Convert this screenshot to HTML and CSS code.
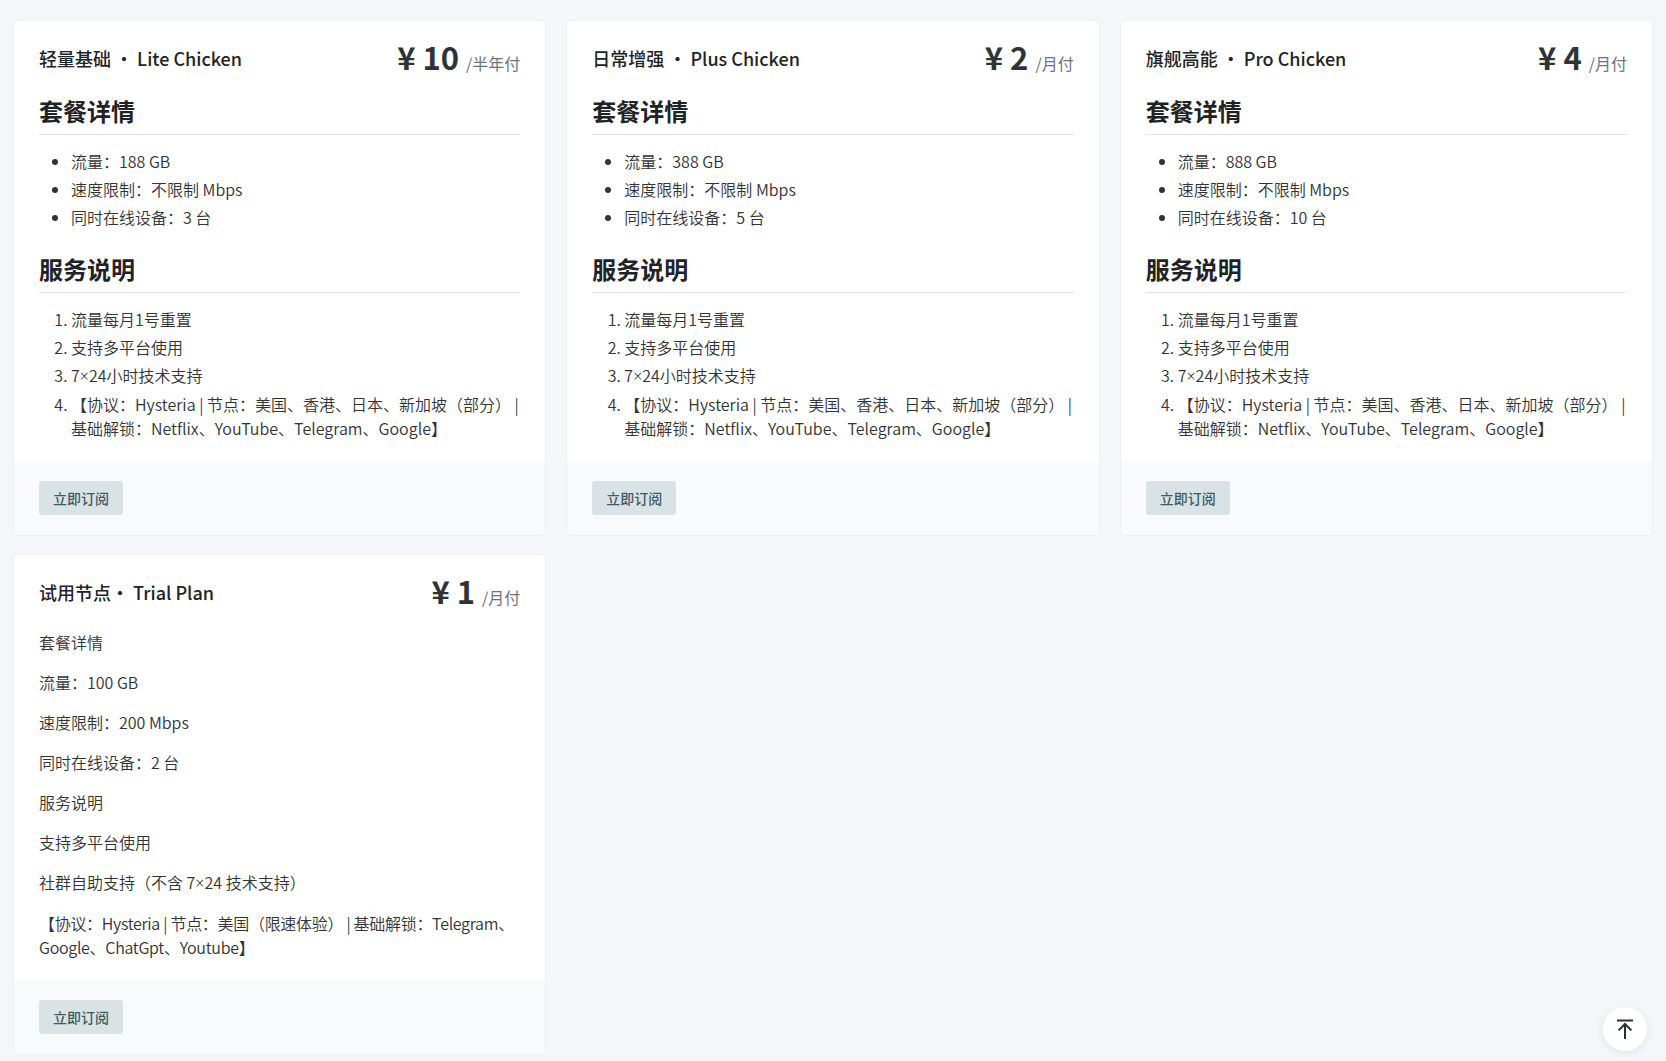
FILE: index.html
```html
<!DOCTYPE html>
<html lang="en">
<head>
	<meta charset="UTF-8">
	<title>购买订阅</title>
	<link rel="stylesheet" href="styles.css">
</head>
<body>
	<div class="plan-list">
		<div class="plan-card">
			<div class="plan-body">
				<div class="plan-head">
					<div class="plan-title">轻量基础 ・ Lite Chicken</div>
					<div class="plan-price">¥ 10<span class="plan-unit">/半年付</span></div>
				</div>
				<div class="plan-content">
					<h3>套餐详情</h3>
					<ul>
						<li>流量：188 GB</li>
						<li>速度限制：不限制 Mbps</li>
						<li>同时在线设备：3 台</li>
					</ul>
					<h3>服务说明</h3>
					<ol>
						<li>流量每月1号重置</li>
						<li>支持多平台使用</li>
						<li>7<span class="times">×</span>24小时技术支持</li>
						<li>【协议：Hysteria | 节点：美国、香港、日本、新加坡（部分） | 基础解锁：Netflix、YouTube、Telegram、Google】</li>
					</ol>
				</div>
			</div>
			<div class="plan-foot"><button class="btn-buy">立即订阅</button></div>
		</div>

		<div class="plan-card">
			<div class="plan-body">
				<div class="plan-head">
					<div class="plan-title">日常增强 ・ Plus Chicken</div>
					<div class="plan-price">¥ 2<span class="plan-unit">/月付</span></div>
				</div>
				<div class="plan-content">
					<h3>套餐详情</h3>
					<ul>
						<li>流量：388 GB</li>
						<li>速度限制：不限制 Mbps</li>
						<li>同时在线设备：5 台</li>
					</ul>
					<h3>服务说明</h3>
					<ol>
						<li>流量每月1号重置</li>
						<li>支持多平台使用</li>
						<li>7<span class="times">×</span>24小时技术支持</li>
						<li>【协议：Hysteria | 节点：美国、香港、日本、新加坡（部分） | 基础解锁：Netflix、YouTube、Telegram、Google】</li>
					</ol>
				</div>
			</div>
			<div class="plan-foot"><button class="btn-buy">立即订阅</button></div>
		</div>

		<div class="plan-card">
			<div class="plan-body">
				<div class="plan-head">
					<div class="plan-title">旗舰高能 ・ Pro Chicken</div>
					<div class="plan-price">¥ 4<span class="plan-unit">/月付</span></div>
				</div>
				<div class="plan-content">
					<h3>套餐详情</h3>
					<ul>
						<li>流量：888 GB</li>
						<li>速度限制：不限制 Mbps</li>
						<li>同时在线设备：10 台</li>
					</ul>
					<h3>服务说明</h3>
					<ol>
						<li>流量每月1号重置</li>
						<li>支持多平台使用</li>
						<li>7<span class="times">×</span>24小时技术支持</li>
						<li>【协议：Hysteria | 节点：美国、香港、日本、新加坡（部分） | 基础解锁：Netflix、YouTube、Telegram、Google】</li>
					</ol>
				</div>
			</div>
			<div class="plan-foot"><button class="btn-buy">立即订阅</button></div>
		</div>

		<div class="plan-card">
			<div class="plan-body">
				<div class="plan-head">
					<div class="plan-title">试用节点・ Trial Plan</div>
					<div class="plan-price">¥ 1<span class="plan-unit">/月付</span></div>
				</div>
				<div class="plan-content">
					<p>套餐详情</p>
					<p>流量：100 GB</p>
					<p>速度限制：200 Mbps</p>
					<p>同时在线设备：2 台</p>
					<p>服务说明</p>
					<p>支持多平台使用</p>
					<p>社群自助支持（不含 7<span class="times">×</span>24 技术支持）</p>
					<p class="trial-note">【协议：Hysteria | 节点：美国（限速体验） | 基础解锁：Telegram、Google、ChatGpt、Youtube】</p>
				</div>
			</div>
			<div class="plan-foot"><button class="btn-buy">立即订阅</button></div>
		</div>
	</div>

	<div class="back-top">
		<svg width="20" height="20" viewBox="0 0 20 20" fill="none" stroke="#2b2f33" stroke-width="2">
			<path d="M2 1.5H18"/>
			<path d="M10 5V20"/>
			<path d="M3.6 11.4L10 5L16.4 11.4"/>
		</svg>
	</div>
</body>
</html>
```

FILE: styles.css
```css
*{
	margin: 0;
	padding: 0;
	box-sizing: border-box;
}
body{
	background-color: #f4f6fa;
	font-family: "Noto Sans CJK SC", "Noto Sans", sans-serif;
	font-size: 16px;
	font-weight: 350;
	line-height: 24px;
	color: #333;
}
.times{
	font-family: "Noto Sans", sans-serif;
}
.plan-list{
	display: grid;
	grid-template-columns: repeat(3, 1fr);
	gap: 20px 22px;
	padding: 21px 14px 8px;
}
.plan-card{
	display: flex;
	flex-direction: column;
	background-color: #fff;
	box-shadow: 0 0 0 1px #eceff3;
	border-radius: 4px;
	overflow: hidden;
}
.plan-body{
	flex: 1;
	padding: 22px 21px 21px 25px;
}
.plan-head{
	display: flex;
	justify-content: space-between;
	align-items: flex-start;
	margin-bottom: 18px;
}
.plan-title{
	font-size: 18px;
	line-height: 30px;
	font-weight: 500;
	color: #1f2326;
}
.plan-price{
	font-size: 31px;
	line-height: 30px;
	font-weight: 700;
	color: #2f3336;
	margin-top: -1px;
	margin-right: 4px;
	white-space: nowrap;
}
.plan-unit{
	font-size: 16px;
	font-weight: 400;
	color: #6c757d;
	margin-left: 7px;
}
.plan-content h3{
	font-size: 24px;
	line-height: 30px;
	font-weight: 700;
	color: #1f2326;
	padding-bottom: 8px;
	border-bottom: 1px solid #dde2e7;
	margin-right: 4px;
}
.plan-content h3 + ul,.plan-content h3 + ol{
	margin-top: 14px;
}
.plan-content ul + h3,.plan-content ol + h3{
	margin-top: 25px;
}
.plan-content ul,.plan-content ol{
	padding-left: 32px;
}
.plan-content li + li{
	margin-top: 4px;
}
.plan-content p + p{
	margin-top: 16px;
}
.plan-content .trial-note{
	letter-spacing: -0.3px;
}
.plan-foot{
	background-color: #f9fafc;
	padding: 20px 25px;
}
.btn-buy{
	font-family: inherit;
	font-size: 14px;
	line-height: 22px;
	font-weight: 500;
	color: #3e5b64;
	background-color: #d9e2e5;
	border: none;
	border-radius: 3px;
	padding: 6px 14px;
	cursor: pointer;
}
.back-top{
	position: fixed;
	right: 19px;
	bottom: 10px;
	width: 44px;
	height: 44px;
	border-radius: 50%;
	background-color: #fff;
	box-shadow: 0 2px 10px rgba(0,0,0, 0.08);
	display: flex;
	align-items: center;
	justify-content: center;
	cursor: pointer;
}
```
